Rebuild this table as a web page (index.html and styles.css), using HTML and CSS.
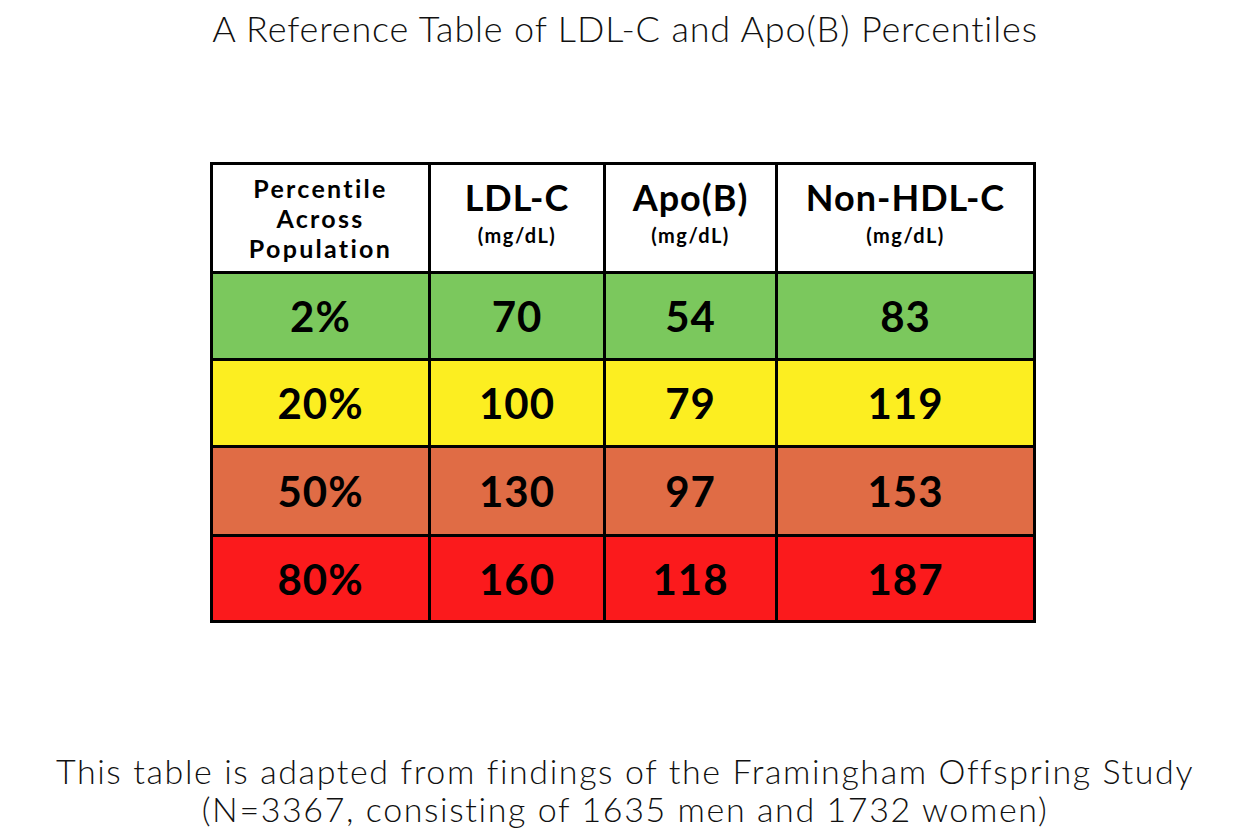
FILE: index.html
```html
<!DOCTYPE html>
<html lang="en">
<head>
<meta charset="utf-8">
<title>LDL-C and Apo(B) Percentiles</title>
<link rel="stylesheet" href="styles.css">
</head>
<body>
<div class="page">
  <h1 class="title">A Reference Table of LDL-C and Apo(B) Percentiles</h1>
  <div class="table">
    <div class="cell head"><span class="head-multi">Percentile<br>Across<br>Population</span></div>
    <div class="cell head"><span class="label">LDL-C</span><span class="unit">(mg/dL)</span></div>
    <div class="cell head"><span class="label">Apo(B)</span><span class="unit">(mg/dL)</span></div>
    <div class="cell head"><span class="label">Non-HDL-C</span><span class="unit">(mg/dL)</span></div>

    <div class="cell green">2%</div>
    <div class="cell green">70</div>
    <div class="cell green">54</div>
    <div class="cell green">83</div>

    <div class="cell yellow">20%</div>
    <div class="cell yellow">100</div>
    <div class="cell yellow">79</div>
    <div class="cell yellow">119</div>

    <div class="cell orange">50%</div>
    <div class="cell orange">130</div>
    <div class="cell orange">97</div>
    <div class="cell orange">153</div>

    <div class="cell red">80%</div>
    <div class="cell red">160</div>
    <div class="cell red">118</div>
    <div class="cell red">187</div>
  </div>
  <p class="footer">This table is adapted from findings of the Framingham Offspring Study<br>(N=3367, consisting of 1635 men and 1732 women)</p>
</div>
</body>
</html>
```
FILE: styles.css
```css
html, body {
  margin: 0;
  padding: 0;
  background: #ffffff;
}
body {
  font-family: "Lato", "Liberation Sans", sans-serif;
  color: #111111;
}
.page {
  width: 1250px;
  height: 833px;
  display: flex;
  flex-direction: column;
  align-items: center;
}
.title {
  margin: 7px 0 0 0;
  font-size: 36px;
  line-height: 42px;
  font-weight: 300;
  letter-spacing: 0.85px;
}
.table {
  margin-top: 113px;
  margin-left: -4px;
  display: grid;
  grid-template-columns: 215px 172px 169px 255px;
  grid-template-rows: 106px 84px 84px 86px 83px;
  gap: 3px;
  background: #000000;
  border: 3px solid #000000;
}
.cell {
  display: flex;
  align-items: center;
  justify-content: center;
  font-weight: 700;
  font-size: 42px;
  letter-spacing: 1px;
  color: #000000;
}
.head {
  background: #ffffff;
  flex-direction: column;
}
.head-multi {
  font-size: 25px;
  line-height: 30px;
  letter-spacing: 2.3px;
  text-align: center;
  margin-top: 0;
}
.label {
  font-size: 36px;
  line-height: 40px;
  letter-spacing: 1px;
  margin-top: -12px;
}
.unit {
  font-size: 20px;
  line-height: 24px;
  letter-spacing: 1.5px;
  margin-top: 6px;
}
.green { background: #7bc85d; }
.yellow { background: #fcee21; }
.orange { background: #e06c45; }
.red { background: #fb1a1c; }
.footer {
  margin: auto 0 5px 0;
  font-size: 34px;
  line-height: 38px;
  text-align: center;
  font-weight: 300;
  letter-spacing: 1.6px;
}
```
